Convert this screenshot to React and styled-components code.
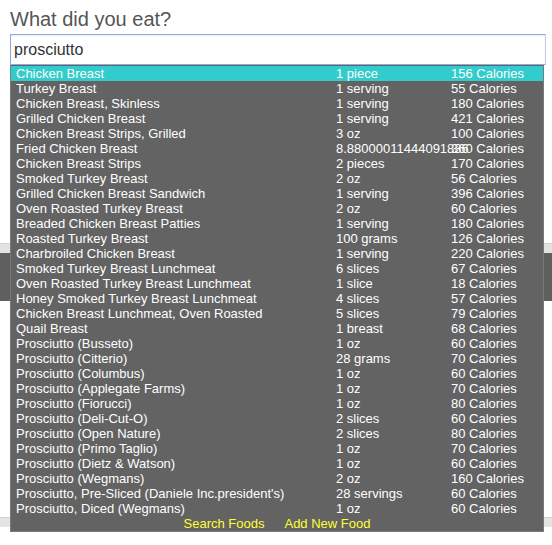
import React from "react";
import styled, { createGlobalStyle } from "styled-components";

const GlobalStyle = createGlobalStyle`
  body {
    margin: 0;
    background: #ffffff;
    font-family: "Liberation Sans", Arial, sans-serif;
  }
`;

const Page = styled.div`
  position: relative;
  width: 552px;
  height: 545px;
  overflow: hidden;
  background: #ffffff;
`;

const Header = styled.div`
  padding: 7px 10px 0 10px;
`;

const Title = styled.h2`
  margin: 0;
  font-size: 20px;
  line-height: 24px;
  font-weight: normal;
  color: #555555;
`;

const SearchBox = styled.div`
  position: relative;
  margin-top: 3px;
  width: 536px;
`;

const Input = styled.input`
  box-sizing: border-box;
  display: block;
  width: 100%;
  height: 31px;
  padding: 1px 3px 0 3px;
  border: 1px solid #8fa9e6;
  border-right-color: #c4cfe8;
  box-shadow: inset 0 1px 2px rgba(0, 0, 0, 0.08);
  font-family: "Liberation Sans", Arial, sans-serif;
  font-size: 16px;
  color: #333333;
  background: #ffffff;
  outline: none;
`;

const Body = styled.div`
  display: flex;
  flex-direction: column;
  padding-top: 178px;
`;

const LightStrip = styled.div`
  height: 9px;
  background: #e2e2e2;
  border-top: 1px solid #d2d2d2;
`;

const DarkBand = styled.div`
  height: 48px;
  background: #5f5f5f;
`;

const Spacer = styled.div`
  height: 216px;
`;

const FooterStrip = styled.div`
  height: 9px;
  background: #e4e4e4;
  border-top: 1px solid #cfcfcf;
`;

const Dropdown = styled.div`
  position: absolute;
  top: 31px;
  left: 0;
  box-sizing: border-box;
  width: 534px;
  background: #636363;
  border: 1px solid #7a7a7a;
  border-top: none;
  padding-top: 1px;
  z-index: 10;
`;

const Row = styled.div`
  display: grid;
  grid-template-columns: 320px 115px 1fr;
  height: 15px;
  padding-left: 5px;
  font-size: 13px;
  line-height: 15px;
  color: #ffffff;
  white-space: nowrap;
  background: ${(p) => (p.$active ? "#33cccc" : "transparent")};
`;

const Cell = styled.span`
  overflow: visible;
`;

const Actions = styled.div`
  display: flex;
  justify-content: center;
  gap: 20px;
  height: 15px;
  font-size: 13px;
  line-height: 15px;
`;

const ActionLink = styled.a`
  color: #ffff33;
  text-decoration: none;
  cursor: pointer;
`;

const foods = [
  ["Chicken Breast", "1 piece", "156 Calories"],
  ["Turkey Breast", "1 serving", "55 Calories"],
  ["Chicken Breast, Skinless", "1 serving", "180 Calories"],
  ["Grilled Chicken Breast", "1 serving", "421 Calories"],
  ["Chicken Breast Strips, Grilled", "3 oz", "100 Calories"],
  ["Fried Chicken Breast", "8.88000011444091836", "360 Calories"],
  ["Chicken Breast Strips", "2 pieces", "170 Calories"],
  ["Smoked Turkey Breast", "2 oz", "56 Calories"],
  ["Grilled Chicken Breast Sandwich", "1 serving", "396 Calories"],
  ["Oven Roasted Turkey Breast", "2 oz", "60 Calories"],
  ["Breaded Chicken Breast Patties", "1 serving", "180 Calories"],
  ["Roasted Turkey Breast", "100 grams", "126 Calories"],
  ["Charbroiled Chicken Breast", "1 serving", "220 Calories"],
  ["Smoked Turkey Breast Lunchmeat", "6 slices", "67 Calories"],
  ["Oven Roasted Turkey Breast Lunchmeat", "1 slice", "18 Calories"],
  ["Honey Smoked Turkey Breast Lunchmeat", "4 slices", "57 Calories"],
  ["Chicken Breast Lunchmeat, Oven Roasted", "5 slices", "79 Calories"],
  ["Quail Breast", "1 breast", "68 Calories"],
  ["Prosciutto (Busseto)", "1 oz", "60 Calories"],
  ["Prosciutto (Citterio)", "28 grams", "70 Calories"],
  ["Prosciutto (Columbus)", "1 oz", "60 Calories"],
  ["Prosciutto (Applegate Farms)", "1 oz", "70 Calories"],
  ["Prosciutto (Fiorucci)", "1 oz", "80 Calories"],
  ["Prosciutto (Deli-Cut-O)", "2 slices", "60 Calories"],
  ["Prosciutto (Open Nature)", "2 slices", "80 Calories"],
  ["Prosciutto (Primo Taglio)", "1 oz", "70 Calories"],
  ["Prosciutto (Dietz & Watson)", "1 oz", "60 Calories"],
  ["Prosciutto (Wegmans)", "2 oz", "160 Calories"],
  ["Prosciutto, Pre-Sliced (Daniele Inc.president's)", "28 servings", "60 Calories"],
  ["Prosciutto, Diced (Wegmans)", "1 oz", "60 Calories"],
];

const App = () => {
  return (
    <>
      <GlobalStyle />
      <Page>
        <Header>
          <Title>What did you eat?</Title>
          <SearchBox>
            <Input type="text" defaultValue="prosciutto" />
            <Dropdown>
              {foods.map(([name, serving, cal], i) => (
                <Row key={i} $active={i === 0}>
                  <Cell>{name}</Cell>
                  <Cell>{serving}</Cell>
                  <Cell>{cal}</Cell>
                </Row>
              ))}
              <Actions>
                <ActionLink>Search Foods</ActionLink>
                <ActionLink>Add New Food</ActionLink>
              </Actions>
            </Dropdown>
          </SearchBox>
        </Header>
        <Body>
          <LightStrip />
          <DarkBand />
          <Spacer />
          <FooterStrip />
        </Body>
      </Page>
    </>
  );
};

export default App;
